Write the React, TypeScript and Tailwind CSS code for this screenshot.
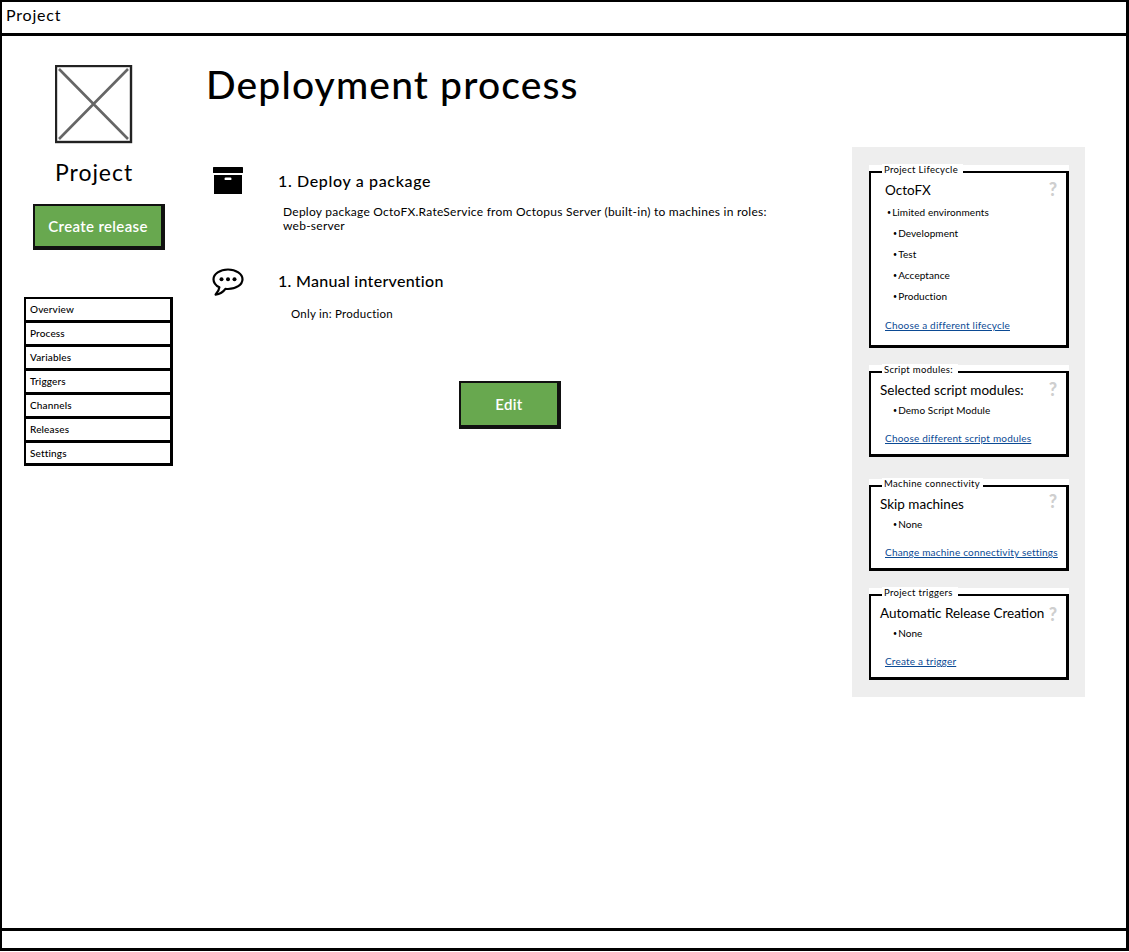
const font = "font-['Lato','Noto_Sans',sans-serif]";

function GreenButton({ label, cls }: { label: string; cls: string }) {
  return (
    <button className={`flex items-center justify-center bg-[#68a84f] border-2 border-[#111] border-r-[4px] border-b-[4px] text-white font-semibold tracking-[0.35px] ${cls}`}>
      {label}
    </button>
  );
}

function Placeholder() {
  return (
    <svg width="78" height="79" viewBox="0 0 78 79" className="block">
      <rect x="1" y="1" width="75" height="76" fill="#fff" stroke="#222" strokeWidth="2.4" />
      <path d="M4 4L73 74M73 4L4 74" stroke="#666" strokeWidth="2.6" fill="none" />
    </svg>
  );
}

function BoxIcon() {
  return (
    <svg width="30" height="28" viewBox="0 0 30 28" className="block">
      <rect x="0" y="0" width="30" height="6" rx="0.5" fill="#000" />
      <path d="M1 8H29V27H1Z" fill="#000" />
      <rect x="11.5" y="10.5" width="7" height="2.6" rx="1.2" fill="#fff" />
    </svg>
  );
}

function ChatIcon() {
  return (
    <svg width="32" height="28" viewBox="0 0 32 28" className="block">
      <path
        d="M16 1.5C8 1.5 1.5 5.8 1.5 11.2C1.5 14.6 3.8 17.5 7.4 19.2C7.2 21.6 6 24 3.6 26.6C8 26 11.2 24 13.4 20.8C14.2 20.9 15.1 21 16 21C24 21 30.5 16.6 30.5 11.2C30.5 5.8 24 1.5 16 1.5Z"
        fill="#fff"
        stroke="#000"
        strokeWidth="2.2"
        strokeLinejoin="round"
      />
      <circle cx="9.5" cy="11.2" r="2" fill="#000" />
      <circle cx="16" cy="11.2" r="2" fill="#000" />
      <circle cx="22.5" cy="11.2" r="2" fill="#000" />
    </svg>
  );
}

const nav = ["Overview", "Process", "Variables", "Triggers", "Channels", "Releases", "Settings"];

function InfoBox({
  legend,
  legendWidth,
  title,
  titlePad,
  items,
  itemsGap,
  link,
  linkPos,
  helpPos,
  height,
  mt,
}: {
  legend: string;
  legendWidth: string;
  title: string;
  titlePad: string;
  items: { text: string; cls: string }[];
  itemsGap: string;
  link: string;
  linkPos: string;
  helpPos: string;
  height: string;
  mt: string;
}) {
  return (
    <section className={`relative bg-white w-[200px] pt-[6px] ${mt}`}>
      <div className={`relative ${height} border-2 border-black border-r-[3px] border-b-[3px] pt-[8px]`}>
        <span className={`absolute left-[11px] top-[-9px] h-[12px] bg-white pl-[2px] text-[9.5px] leading-[12px] tracking-[0.33px] whitespace-nowrap ${legendWidth}`}>
          {legend}
        </span>
        <span className={`absolute right-[9px] text-[18px] leading-[18px] font-black text-[#cfcfcf] ${helpPos}`}>?</span>
        <div className={`text-[13.5px] leading-[18px] whitespace-nowrap ${titlePad}`}>{title}</div>
        <ul className={itemsGap}>
          {items.map((it) => (
            <li key={it.text} className={`h-[21px] text-[10px] leading-[21px] tracking-[0.08px] whitespace-nowrap ${it.cls}`}>
              <span className="text-[7px] mr-[1px] align-[1px]">•</span>
              {it.text}
            </li>
          ))}
        </ul>
        <a className={`absolute left-[14px] text-[10px] leading-[12px] tracking-[0.2px] text-[#0b4a94] underline whitespace-nowrap ${linkPos}`}>
          {link}
        </a>
      </div>
    </section>
  );
}

export default function App() {
  return (
    <div className={`w-[1129px] h-[951px] bg-white text-black flex flex-col border-2 border-black border-r-[3px] border-b-[3px] overflow-hidden ${font}`}>
      <header className="h-[34px] shrink-0 border-b-[3px] border-black pl-[4px] pt-[4px] text-[16px] leading-[18px] tracking-[0.8px]">Project</header>

      <main className="flex-1 flex min-h-0">
        <aside className="w-[202px] shrink-0 flex flex-col">
          <div className="ml-[53px] mt-[29px]">
            <Placeholder />
          </div>
          <div className="ml-[53px] mt-[14px] text-[23px] leading-[28px] tracking-[0.95px]">Project</div>
          <GreenButton label="Create release" cls="ml-[31px] mt-[18px] w-[132px] h-[46px] text-[15px]" />
          <nav className="ml-[22px] mt-[47px] w-[149px] border-2 border-black border-r-[3px] border-b-[3px]">
            {nav.map((n, i) => (
              <div
                key={n}
                className={`pl-[4px] text-[10px] font-medium leading-[21px] tracking-[0.15px] ${i < nav.length - 1 ? "h-[24px] border-b-[3px] border-black" : "h-[20px]"}`}
              >
                {n}
              </div>
            ))}
          </nav>
        </aside>

        <section className="w-[648px] shrink-0">
          <h1 className="ml-[2px] mt-[25px] text-[39px] leading-[46px] font-medium tracking-[1.15px] whitespace-nowrap">Deployment process</h1>

          <div className="mt-[60px] ml-[9px] flex">
            <div className="w-[65px] shrink-0"><BoxIcon /></div>
            <div className="pt-[4px]">
              <div className="text-[16px] leading-[20px] font-medium tracking-[0.65px]">1. Deploy a package</div>
              <p className="ml-[5px] mt-[14px] text-[12px] leading-[14px] tracking-[0.25px] whitespace-nowrap">
                Deploy package OctoFX.RateService from Octopus Server (built-in) to machines in roles:
                <br />
                web-server
              </p>
            </div>
          </div>

          <div className="mt-[35px] ml-[8px] flex">
            <div className="w-[66px] shrink-0"><ChatIcon /></div>
            <div className="pt-[3px]">
              <div className="text-[16px] leading-[20px] font-medium tracking-[0.28px]">1. Manual intervention</div>
              <p className="ml-[13px] mt-[16px] text-[11.5px] leading-[14px] tracking-[0.25px]">Only in: Production</p>
            </div>
          </div>

          <GreenButton label="Edit" cls="ml-[255px] mt-[60px] w-[102px] h-[48px] text-[15px]" />
        </section>

        <aside className="mt-[111px] w-[233px] h-[550px] shrink-0 bg-[#eeeeee] pl-[17px] pt-[18px]">
          <InfoBox
            legend="Project Lifecycle"
            legendWidth="w-[81px]"
            title="OctoFX"
            titlePad="pl-[14px]"
            height="h-[177px]"
            mt="mt-0"
            itemsGap="mt-[3px]"
            helpPos="top-[7px]"
            linkPos="bottom-[14px]"
            link="Choose a different lifecycle"
            items={[
              { text: "Limited environments", cls: "pl-[16px]" },
              { text: "Development", cls: "pl-[22px]" },
              { text: "Test", cls: "pl-[22px]" },
              { text: "Acceptance", cls: "pl-[22px]" },
              { text: "Production", cls: "pl-[22px]" },
            ]}
          />
          <InfoBox
            legend="Script modules:"
            legendWidth="w-[76px]"
            title="Selected script modules:"
            titlePad="pl-[9px]"
            height="h-[86px]"
            mt="mt-[17px]"
            itemsGap="mt-[1px]"
            helpPos="top-[7px]"
            linkPos="bottom-[10px]"
            link="Choose different script modules"
            items={[{ text: "Demo Script Module", cls: "pl-[22px]" }]}
          />
          <InfoBox
            legend="Machine connectivity"
            legendWidth="w-[101px]"
            title="Skip machines"
            titlePad="pl-[9px]"
            height="h-[86px]"
            mt="mt-[22px]"
            itemsGap="mt-[1px]"
            helpPos="top-[5px]"
            linkPos="bottom-[10px]"
            link="Change machine connectivity settings"
            items={[{ text: "None", cls: "pl-[22px]" }]}
          />
          <InfoBox
            legend="Project triggers"
            legendWidth="w-[76px]"
            title="Automatic Release Creation"
            titlePad="pl-[9px]"
            height="h-[86px]"
            mt="mt-[17px]"
            itemsGap="mt-[1px]"
            helpPos="top-[9px]"
            linkPos="bottom-[10px]"
            link="Create a trigger"
            items={[{ text: "None", cls: "pl-[22px]" }]}
          />
        </aside>
      </main>

      <footer className="h-[20px] shrink-0 border-t-[3px] border-black" />
    </div>
  );
}
